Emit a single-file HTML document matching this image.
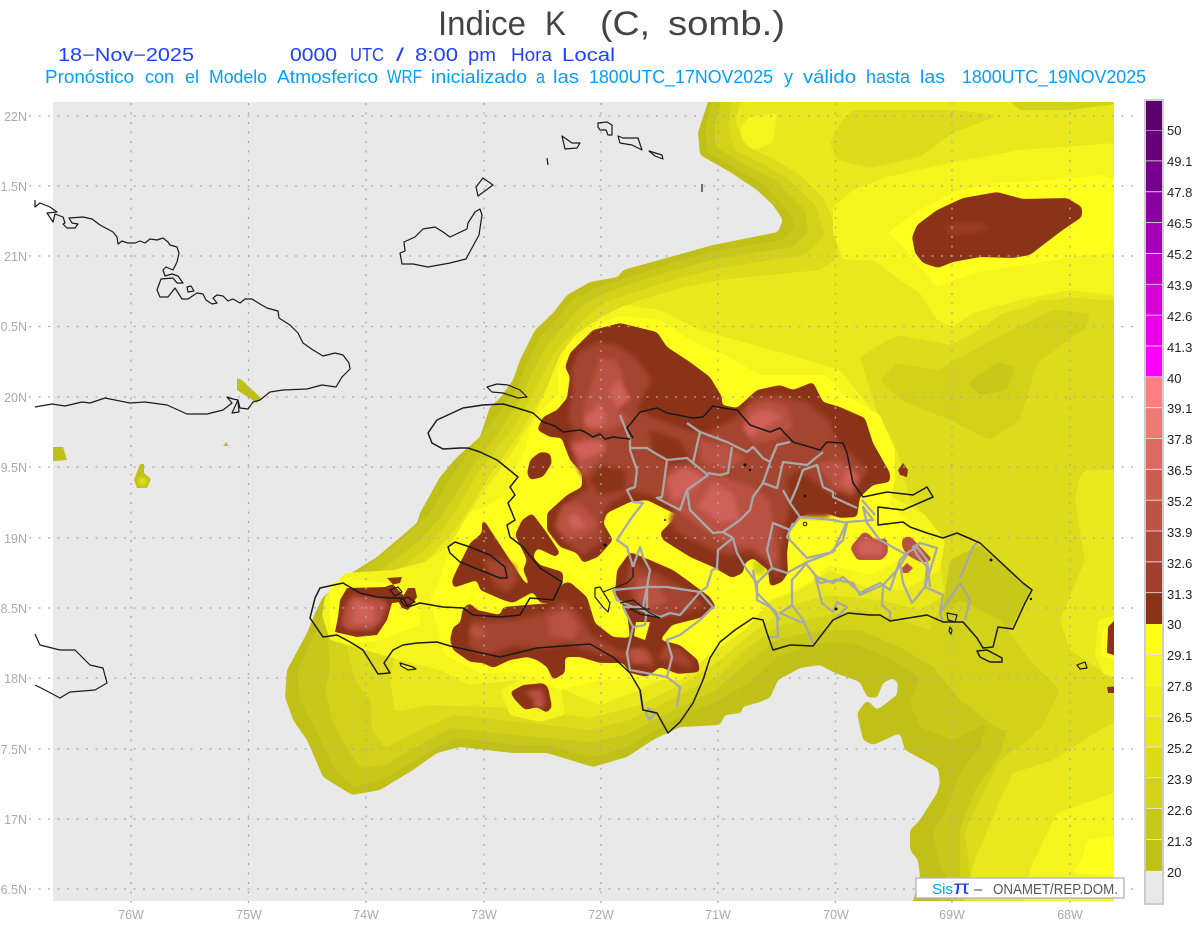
<!DOCTYPE html>
<html><head><meta charset="utf-8"><title>Indice K</title>
<style>html,body{margin:0;padding:0;background:#fff}svg{display:block}text{font-family:"Liberation Sans",sans-serif}.s{filter:url(#s)}.b{filter:url(#b)}</style></head>
<body>
<svg width="1200" height="927" viewBox="0 0 1200 927" xmlns="http://www.w3.org/2000/svg">
<defs>
<filter id="s" x="-20%" y="-20%" width="140%" height="140%" color-interpolation-filters="sRGB"><feGaussianBlur stdDeviation="2.2"/><feComponentTransfer><feFuncA type="linear" slope="10" intercept="-4.5"/></feComponentTransfer></filter>
<filter id="b" x="-30%" y="-30%" width="160%" height="160%" color-interpolation-filters="sRGB"><feGaussianBlur stdDeviation="2.4"/></filter>
<clipPath id="m"><rect x="53" y="102" width="1061" height="799"/></clipPath>
</defs>
<rect width="1200" height="927" fill="#fff"/>
<!-- headings -->
<g fill="#444" font-size="34">
<text x="438" y="35" textLength="88" lengthAdjust="spacingAndGlyphs">Indice</text>
<text x="545" y="35" textLength="21" lengthAdjust="spacingAndGlyphs">K</text>
<text x="600" y="35" textLength="50" lengthAdjust="spacingAndGlyphs">(C,</text>
<text x="668" y="35" textLength="117" lengthAdjust="spacingAndGlyphs">somb.)</text>
</g>
<g fill="#2040ff" font-size="18">
<text x="58" y="61" textLength="136" lengthAdjust="spacingAndGlyphs">18−Nov−2025</text>
<text x="290" y="61" textLength="47" lengthAdjust="spacingAndGlyphs">0000</text>
<text x="350" y="61" textLength="34" lengthAdjust="spacingAndGlyphs">UTC</text>
<text x="396" y="61" textLength="8" lengthAdjust="spacingAndGlyphs">/</text>
<text x="415" y="61" textLength="43" lengthAdjust="spacingAndGlyphs">8:00</text>
<text x="468" y="61" textLength="28" lengthAdjust="spacingAndGlyphs">pm</text>
<text x="511" y="61" textLength="41" lengthAdjust="spacingAndGlyphs">Hora</text>
<text x="562" y="61" textLength="53" lengthAdjust="spacingAndGlyphs">Local</text>
</g>
<g fill="#00a0ff" font-size="18">
<text x="45" y="83" textLength="89" lengthAdjust="spacingAndGlyphs">Pronóstico</text>
<text x="145" y="83" textLength="29" lengthAdjust="spacingAndGlyphs">con</text>
<text x="185" y="83" textLength="14" lengthAdjust="spacingAndGlyphs">el</text>
<text x="209" y="83" textLength="58" lengthAdjust="spacingAndGlyphs">Modelo</text>
<text x="277" y="83" textLength="101" lengthAdjust="spacingAndGlyphs">Atmosferico</text>
<text x="387" y="83" textLength="35" lengthAdjust="spacingAndGlyphs">WRF</text>
<text x="431" y="83" textLength="96" lengthAdjust="spacingAndGlyphs">inicializado</text>
<text x="536" y="83" textLength="9" lengthAdjust="spacingAndGlyphs">a</text>
<text x="553" y="83" textLength="26" lengthAdjust="spacingAndGlyphs">las</text>
<text x="589" y="83" textLength="184" lengthAdjust="spacingAndGlyphs">1800UTC_17NOV2025</text>
<text x="784" y="83" textLength="9" lengthAdjust="spacingAndGlyphs">y</text>
<text x="803" y="83" textLength="53" lengthAdjust="spacingAndGlyphs">válido</text>
<text x="866" y="83" textLength="44" lengthAdjust="spacingAndGlyphs">hasta</text>
<text x="920" y="83" textLength="25" lengthAdjust="spacingAndGlyphs">las</text>
<text x="962" y="83" textLength="184" lengthAdjust="spacingAndGlyphs">1800UTC_19NOV2025</text>
</g>
<!-- map background -->
<rect x="53" y="102" width="1061" height="799" fill="#e9e9e9"/>
<g clip-path="url(#m)">
<!-- small western patches -->
<g fill="#c0c018">
<polygon points="45,447 63,447 67,460 45,462"/>
<polygon points="135,477 140,464 144,464 144,473 151,479 147,488 137,488 134,480"/>
<polygon points="237,378 242,380 261,398 257,403 237,390"/>
<polygon points="223,446 226,442 229,446"/>
</g>
<polygon fill="#e8e81c" points="139,478 146,478 146,485 139,485" class="b"/>
<!-- scalar field layers -->
<polygon class="s" fill="#c0c018" points="708,90 708,102 698,132 700,155 730,172 757,190 773,205 783,220 778,232 713,245 670,257 623,270 618,277 590,282 567,295 553,313 535,330 520,360 513,380 500,398 490,407 480,437 457,457 440,477 420,513 417,523 377,557 353,572 323,597 315,613 307,633 287,670 285,697 293,720 307,740 317,763 323,777 352,795 380,790 413,770 437,753 460,747 513,753 547,753 593,767 627,757 653,740 680,727 720,725 725,715 742,713 742,707 757,703 770,698 778,680 800,668 820,665 833,672 860,682 867,697 877,698 883,683 893,678 898,683 897,695 877,710 867,700 857,713 863,740 873,745 900,733 905,750 938,768 940,783 937,793 920,820 910,830 910,850 918,860 920,877 913,901 910,915 1130,915 1130,90"/>
<polygon class="s" fill="#c8c81a" points="716,90 705,128 707,152 735,168 765,186 792,215 795,228 782,240 715,251 672,263 628,277 595,288 572,300 558,318 540,337 526,365 517,388 505,405 490,425 467,455 450,480 430,513 410,533 385,553 360,572 330,595 320,620 312,640 297,672 300,700 315,728 325,750 337,772 354,787 382,780 416,760 440,745 460,738 513,745 547,745 593,757 625,748 655,730 690,712 720,700 753,680 777,657 820,643 853,643 893,660 920,677 910,703 920,727 953,740 987,723 980,747 960,773 947,807 933,833 940,867 947,877 933,915 1130,915 1130,90"/>
<polygon class="s" fill="#d2d21a" points="725,90 714,128 716,147 745,165 775,180 805,210 808,232 792,247 720,258 675,270 630,284 600,295 578,308 565,325 547,345 532,372 523,395 510,415 497,435 475,463 458,490 440,518 420,540 395,560 370,578 340,600 328,640 330,670 325,690 332,720 345,745 360,768 385,765 420,745 450,728 515,735 590,742 625,735 670,712 715,690 745,665 775,640 820,630 860,630 905,650 930,665 960,680 1000,690 1010,720 1000,755 975,790 960,830 960,880 950,915 1130,915 1130,90"/>
<polygon class="s" fill="#dcdc1c" points="735,90 728,125 735,150 765,165 790,180 815,205 825,235 805,255 720,268 680,278 635,292 605,302 585,318 570,335 553,355 540,380 530,400 515,425 500,445 480,470 465,495 450,520 430,545 405,565 380,580 350,600 345,640 355,680 370,700 372,730 385,748 420,730 455,715 520,722 590,730 630,720 680,695 720,675 745,650 780,625 830,615 860,610 900,620 960,640 1000,660 1030,665 1040,700 1035,735 1000,760 985,790 965,830 975,915 1130,915 1130,90"/>
<!-- east DR darker -->
<polygon class="s" fill="#c8c81a" points="950,560 980,545 1030,590 1010,630 985,650 960,630 940,625"/>
<polygon class="s" fill="#d2d21a" points="930,620 960,600 1000,620 1030,660 1060,690 1040,730 1000,730 960,700 935,670"/>
<!-- e8 main -->
<polygon class="s" fill="#e8e81c" points="745,90 735,120 745,145 775,160 800,175 825,200 840,240 835,260 820,270 720,280 680,288 640,300 610,312 590,328 575,345 560,365 547,388 535,408 522,430 505,455 488,478 472,505 455,530 435,552 415,570 395,582 400,630 390,680 395,712 430,705 520,708 590,718 640,705 690,680 720,660 750,635 790,605 830,595 880,600 920,610 945,595 940,560 930,520 910,500 900,460 885,420 880,380 870,340 850,300 860,355 900,335 950,345 1040,300 1130,300 1130,90"/>
<polygon class="s" fill="#e8e81c" points="1130,430 1085,450 1075,500 1085,560 1060,620 1070,650 1130,690"/>
<polygon class="s" fill="#e8e81c" points="1000,800 1013,773 1053,760 1100,730 1130,713 1130,915 960,915 975,860"/>
<polygon class="s" fill="#f5f51e" points="1047,833 1057,813 1130,787 1130,915 1020,915 1030,870"/>
<polygon class="s" fill="#ffff1e" points="1087,840 1130,833 1130,877 1073,873 1083,857"/>
<!-- NE patches -->
<polygon class="s" fill="#dcdc1c" points="830,143 840,123 853,110 953,110 1000,115 953,133 920,157 870,168 837,160"/>
<polygon class="s" fill="#d2d21a" points="997,90 1130,90 1130,102 1070,110 1020,110"/>
<polygon class="s" fill="#f5f51e" points="740,127 750,117 777,113 773,143 753,150 742,140"/>
<polygon class="s" fill="#f5f51e" points="833,207 853,190 887,177 950,163 1020,150 1130,142 1130,297 1070,290 1020,300 973,313 953,327 937,320 920,293 900,280 873,260 843,260 833,233"/>
<polygon class="s" fill="#ffff1e" points="887,233 920,210 960,190 997,183 1053,180 1100,175 1130,183 1130,250 1070,257 1037,263 987,270 953,280 937,287 920,267 900,243"/>
<polygon class="s" fill="#dcdc1c" points="860,357 893,337 927,350 953,347 1003,313 1070,297 1130,303 1130,470 1085,470 1050,520 1030,490 1000,510 950,510 930,490 900,450 880,420 870,390"/>
<polygon class="s" fill="#d2d21a" points="880,380 897,363 937,370 987,343 1053,310 1090,313 1087,327 1037,363 1020,420 990,440 950,420 900,400"/>
<polygon class="s" fill="#c8c81a" points="968,383 997,362 1015,367 1007,390 980,395"/>
<!-- f4 main -->
<polygon class="s" fill="#f5f51e" points="625,305 600,318 575,335 560,355 548,385 535,415 520,440 500,470 485,490 468,515 450,545 425,562 395,570 345,573 325,597 322,615 330,640 400,660 440,670 470,685 520,680 560,688 600,705 640,690 690,665 715,650 735,625 760,605 800,590 830,570 870,590 905,590 940,570 945,540 925,515 880,490 895,460 880,420 860,395 840,370 790,355 700,330 660,310"/>
<polygon class="s" fill="#f5f51e" points="500,690 530,675 560,680 565,715 540,722 510,715"/>
<polygon class="s" fill="#ffff1e" points="620,316 595,325 568,345 558,370 558,395 540,412 530,430 525,450 515,470 510,490 490,505 470,512 450,545 440,580 430,600 445,655 480,673 515,672 540,680 560,690 600,680 640,680 680,680 715,650 745,630 770,600 805,585 830,565 870,575 900,560 925,535 890,505 895,480 895,450 880,415 845,395 825,375 790,375 760,375 725,355 690,340 660,320"/>
<polygon class="s" fill="#ffff1e" points="330,585 345,578 395,585 420,600 420,625 380,640 345,645 330,625"/>
<polygon class="b" fill="#d2d21a" points="752,562 760,558 768,565 764,575 754,574"/>
<polygon class="s" fill="#f5f51e" points="1130,612 1098,620 1095,655 1104,675 1130,678"/>
<polygon class="s" fill="#ffff1e" points="1130,622 1103,628 1100,655 1130,664"/>
<!-- brown contours -->
<g fill="#8b3318">
<polygon class="s" points="620,323 593,330 570,353 565,367 570,377 567,398 557,410 543,417 537,430 550,437 562,438 563,442 570,460 582,473 582,487 567,495 547,513 547,530 560,547 577,553 583,563 598,557 613,540 603,523 607,513 630,502 647,500 667,510 683,517 673,520 660,533 663,540 690,557 713,567 732,578 743,573 745,563 753,558 768,570 770,587 782,582 788,573 787,553 790,530 800,517 817,510 840,518 857,517 860,497 873,485 890,482 890,473 873,443 865,418 840,407 823,402 813,382 793,390 780,385 757,390 737,408 722,405 722,397 710,377 690,362 667,347 657,332"/>
<polygon class="s" points="450,640 453,627 460,623 463,608 470,603 477,610 500,615 503,607 550,603 563,583 570,582 587,597 595,623 613,637 630,638 627,612 615,593 617,570 630,552 650,560 673,570 687,580 710,597 716,607 700,618 672,625 660,640 680,645 698,660 700,672 678,674 660,667 647,677 630,673 623,663 600,663 580,657 565,657 565,673 553,680 547,667 537,660 527,657 510,660 493,668 483,663 470,662 453,650"/>
<polygon class="s" points="482,517 482,533 470,543 460,563 452,580 453,588 477,580 480,590 503,600 513,603 533,592 523,570 527,560 515,535 522,520 532,513 547,533 560,553 556,557 537,548 533,557 540,565 563,572 563,582 552,603 540,603 533,592 523,580"/>
<polygon class="s" points="530,460 540,452 550,453 552,463 543,477 530,480 527,473"/>
<polygon points="387,578 402,577 400,583 390,585 385,587 347,588 340,600 338,617 335,632 357,637 377,635 387,620 392,603 403,602 405,597"/>
<polygon points="408,588 415,588 417,597 408,610 402,608 399,603"/>
<polygon class="s" points="510,692 523,685 543,683 548,687 552,707 547,713 537,707 525,710 515,700"/>
<polygon class="s" points="912,237 917,225 937,210 963,198 997,192 1023,199 1067,198 1082,207 1082,217 1073,223 1060,232 1030,255 1013,258 980,257 953,262 938,268 923,263 915,253"/>
<polygon points="1120,615 1108,627 1107,653 1120,657"/>
<polygon points="1107,687 1120,686 1120,693 1108,693"/>
<polygon points="898,470 903,463 908,470 907,477 900,475"/>
</g>
<polygon fill="#ffff1e" points="636,622 650,622 645,640 634,636"/>
<polygon class="b" fill="#9a3c28" points="945,228 953,223 980,222 990,228 977,233 950,235"/>
<!-- crisp SE blobs -->
<g fill="#b95242" class="s">
<polygon points="850,548 863,532 868,533 875,540 887,538 888,553 882,560 857,560"/>
<polygon points="902,538 910,536 933,560 922,563 907,555 902,547"/>
</g>
<polygon fill="#b95242" points="902,568 907,563 913,568 908,573 903,573"/>
<!-- reddish layers -->
<g fill="#a4452f" class="b">
<polygon points="572,367 579,352 597,342 617,345 637,359 651,380 641,400 637,410 660,420 687,430 707,433 737,417 753,397 780,395 807,402 828,419 838,442 868,470 856,488 838,491 790,508 785,527 781,553 781,572 775,577 772,565 750,551 727,556 697,543 675,531 669,520 675,507 650,495 630,491 607,506 601,523 605,538 583,555 565,542 555,527 558,512 572,499 589,487 575,463 569,443 575,430 568,420 572,393"/>
<polygon points="472,620 493,621 513,620 543,613 563,601 578,612 591,635 620,652 645,647 655,660 652,667 630,661 597,653 567,643 547,649 513,646 487,655 468,646"/>
<polygon points="630,562 650,570 690,592 704,605 690,612 660,617 640,612 632,600 626,580"/>
<polygon points="483,560 500,558 515,565 518,580 508,592 495,586 490,575"/>
<polygon points="665,645 680,650 692,662 690,667 670,662 658,658"/>
</g>
<g fill="#8b3318" class="b">
<polygon points="797,470 823,487 840,507 827,517 800,517 790,507 787,480"/>
<polygon points="650,430 680,440 690,460 670,465 652,450"/>
<polygon points="600,465 625,470 625,490 600,495 590,480"/>
</g>
<g fill="#b95242" class="b">
<polygon points="583,417 587,397 600,357 617,360 623,377 613,403 630,420 610,430 590,430"/>
<polygon points="572,443 590,437 607,443 597,463 582,476"/>
<polygon points="660,493 673,467 707,470 733,480 753,487 770,500 773,523 778,555 773,570 770,560 753,547 730,547 700,527 680,513"/>
<polygon points="747,407 767,400 787,407 793,427 773,440 753,443 743,430"/>
<polygon points="700,440 727,445 745,458 725,472 700,462"/>
<polygon points="817,463 840,460 860,477 853,497 833,487"/>
<polygon points="563,505 580,502 598,523 590,535 570,540 556,527"/>
<polygon points="472,625 487,630 480,640 470,633"/>
<polygon points="547,617 567,610 580,627 573,640 550,635"/>
<polygon points="629,650 643,649 651,661 633,664"/>
<polygon points="352,595 380,599 388,604 381,622 371,630 349,630 341,625 345,607"/>
<polygon points="525,692 541,689 546,703 535,701"/>
<polygon points="637,575 655,582 668,600 650,610 637,600"/>
</g>
<g fill="#d0605a" class="b">
<polygon points="667,477 687,467 703,477 687,497 672,500"/>
<polygon points="713,483 733,493 740,520 720,523 697,507"/>
<polygon points="753,413 767,410 783,417 767,427 750,437 743,427"/>
<polygon points="583,420 600,403 607,417 603,427 587,427"/>
<polygon points="572,445 600,440 607,450 580,460"/>
<polygon points="567,517 577,513 587,527 573,530"/>
<polygon points="857,545 866,538 884,544 883,555 860,555"/>
<polygon points="912,545 925,555 915,557"/>
<polygon points="845,468 857,474 850,490 842,483"/>
<polygon points="354,600 375,606 374,622 352,625"/>
<polygon points="532,700 543,702 543,708 536,706"/>
<polygon points="620,378 630,400 615,410 610,390"/>
</g>
<polygon fill="#ffff1e" points="707,625 716,625 716,628 707,628"/>
</g>
<!-- grid -->
<g stroke="#aaa" stroke-width="1.3" stroke-dasharray="2 7.5" fill="none">
<path d="M29 116H1134M29 186H1134M29 256H1134M29 326.500H1134M29 397H1134M29 467H1134M29 538H1134M29 608H1134M29 678H1134M29 749H1134M29 819H1134M29 889H1134"/>
<path d="M131 103V906M248.500 103V906M366 103V906M484 103V906M601 103V906M718 103V906M835.500 103V906M952 103V906M1070 103V906"/>
</g>
<!-- gray province lines -->
<g fill="none" stroke="#a8a8a8" stroke-width="2.300" stroke-linejoin="round">
<path d="M620 415L630 440V450L637 470L635 487L627 490L633 502L643 503L630 520L617 540L627 547L633 567L640 547L643 557L650 570L647 587L643 607"/>
<path d="M630 448H647L653 452L667 460L687 458L693 463L700 432L687 423"/>
<path d="M700 432L727 442L747 452L753 447L763 458L770 462L777 445L790 442"/>
<path d="M667 460L662 497L657 498L680 510L687 490L697 483L708 475L693 463"/>
<path d="M708 473L720 475L728 473L732 447"/>
<path d="M687 490L690 510L700 520L713 533L723 532L740 520L750 510L753 497L763 483L770 463"/>
<path d="M763 483L777 488L783 462L807 465L823 452"/>
<path d="M783 490L790 503L797 487L803 470L817 465L823 487L833 492V497L857 508"/>
<path d="M790 503L800 517L790 530L773 523L767 550L772 568L787 573L807 562L830 553L843 540L847 523L833 520L800 517"/>
<path d="M723 532L733 538L718 550L717 568L712 570L707 587L700 592L667 587L647 587L613 590"/>
<path d="M733 538L737 553L747 570L757 583L763 577L772 568"/>
<path d="M757 583V600L770 607L780 620"/>
<path d="M807 565L817 577L833 583L843 577L860 593L880 583L890 590L900 560L907 553L917 547L927 560L930 587"/>
<path d="M793 523L787 537L807 558L833 552L847 522L873 520L863 507L867 523L880 540L907 555L897 570L883 585L860 595L853 583L837 580L820 583L815 575L822 603L833 612L837 602L847 607L837 617"/>
<path d="M883 587L882 605L890 612V620"/>
<path d="M900 563L903 583L912 603L925 587L927 567L917 555L913 547L920 543L937 548L925 587L943 595L940 613L943 622"/>
<path d="M960 583L940 613M960 583L970 600L965 620M960 578L973 547L978 542"/>
<path d="M807 563L792 580V605L803 620L813 643M803 623L780 613L792 605M777 613L778 637L767 637"/>
<path d="M753 570L757 593L777 613"/>
<path d="M862 500L875 515"/>
<path d="M613 590L617 600L633 607L660 617L670 613L680 615L700 592L713 607L700 620L680 635L667 640L672 657L667 677L680 687L677 707"/>
<path d="M647 587V607L645 625L633 627L627 653L630 670L667 677"/>
<path d="M643 607L623 607L633 627"/>
<path d="M640 690L643 710"/>
<path d="M648 708L655 713L650 720L646 714Z"/>
</g>
<!-- coasts -->
<g fill="none" stroke="#1a1a1a" stroke-width="1.200" stroke-linejoin="round">
<path d="M35 200V207L40 203L50 207L57 212L47 213L53 222L55 214L63 217L65 223L63 224L67 228L75 228L78 224L72 223L69 218L83 217L92 219L100 225L113 232L117 237L118 244L122 241L128 243L135 243L140 241L145 243L150 239L157 240L163 238L168 242L170 245L177 247L179 253L177 262L173 270L166 267L163 270L165 276L172 274L178 276L183 283L177 283L173 278L161 279L157 290L160 297L168 297L175 288L182 299L188 299L197 293L203 294L206 300L212 304L217 303L213 298L217 295L223 296L228 301L233 299L240 303L245 299L252 299L260 304L267 308L278 311L279 318L290 325L298 333L303 343L313 350L323 356L335 353L343 355L349 363L350 369L342 377L336 387L322 385L307 389L283 390L270 392L260 400L253 402L248 409L240 408L238 400L232 413L239 412L238 400L233 399L227 397L232 403L223 410L207 414L187 414L167 405L145 402L130 403L105 398L90 403L82 402L65 406L52 404L35 407"/>
<path d="M187 287L191 286L194 291L188 292Z"/>
<path d="M480 209L482 215L479 235L466 259L450 263L428 267L413 264L402 264L400 253L405 251L404 242L415 237L423 229L435 227L443 232L450 237L467 229L468 223L475 212Z"/>
<path d="M483 178L493 185L478 196L476 187Z"/>
<path d="M562 136L572 143L580 143L577 148L565 149Z"/>
<path d="M598 123L607 122L612 125V135H608L606 130H600L598 127Z"/>
<path d="M618 136L623 138H638L642 150L632 145L620 143Z"/>
<path d="M649 151L662 155L663 159L655 156Z"/>
<path d="M547 158L548 165M702 184L702 192"/>
<path d="M487 387L497 384L508 385L520 390L527 397L518 398L503 393L492 392Z"/>
<path d="M400 663L413 667L416 669L408 670L401 666Z"/>
<path d="M390 590L398 587L402 592L395 596Z"/>
<path d="M35 634L40 645L60 650L75 650L90 665L103 668L107 683L95 690L70 692L60 698L45 690L35 685"/>
<path d="M448 547L455 542L470 547L490 555L505 567L507 578L500 578L480 570L460 562L450 553Z" stroke-width="1.500"/>
<path d="M595 588L600 587L610 603L608 612L603 607L595 597Z"/>
<path d="M977 651L987 650L1002 658V662L990 662L980 657Z" stroke-width="1.500"/>
<path d="M1077 665L1085 662L1087 668L1080 669Z"/>
<path d="M947 613L957 615L955 622L948 620Z"/>
<path d="M950 627L952 630L951 634L949 631Z"/>
<path d="M630 439L613 437L605 439L600 434L593 437L585 432L580 430L563 432L555 426L543 422L533 413L517 408L503 404L483 405L463 408L437 420L428 433L432 443L443 449L460 448L468 448L480 452L497 460L507 468L518 477L510 487L515 495L508 503L515 520L507 525L510 537L523 547L540 568L562 582L553 600L530 598L520 615L500 617L473 615L463 608L443 607L420 603L408 607L403 598L390 598L377 597L360 593L343 583L320 588L315 598L310 618L323 637L337 635L350 642L363 650L378 674L390 673L384 663L393 650L403 645L417 643L437 642L450 646L500 657L537 648L590 644L613 657L630 673L640 690L643 710L657 713L668 733L680 722L693 703L703 680L710 658L720 642L735 630L753 618L763 620L767 633L773 650L790 645L813 646L833 620L848 613L870 615L880 615L890 621L927 615L943 622L963 622L977 638L983 648L993 647L998 627L1013 629L1025 603L1032 590L1023 583L980 543L957 533L943 538L927 533L910 527L903 522L878 525V507L903 510L933 497L927 487L913 495L887 492L863 497L853 483L847 453L843 443L827 442L820 450L793 442L780 428L770 432L750 425L737 410L723 408L713 406L703 417L693 418L667 413L657 408L640 412L627 428L633 438" stroke-width="1.500"/>
<path d="M633 567V577L627 583L603 592"/>
<path d="M620 603L633 600L650 613L660 618L640 614L630 609L650 609"/>
<path d="M400 600L408 597L415 602L405 606Z"/>
</g>
<g fill="#111">
<circle cx="1031" cy="599" r="1.200"/><circle cx="991" cy="560" r="1.500"/><circle cx="836" cy="609" r="1.500"/><circle cx="605" cy="545" r="1.500"/><circle cx="750" cy="470" r="1.200"/><circle cx="745" cy="465" r="1.500"/><circle cx="805" cy="496" r="1.200"/><circle cx="665" cy="520" r="1"/>
</g>
<circle cx="805" cy="524" r="1.800" fill="none" stroke="#111"/>
<!-- axis labels -->
<g fill="#aaa" font-size="12.500" text-anchor="end">
<text x="27" y="121">22N</text><text x="27" y="191">1.5N</text><text x="27" y="261">21N</text><text x="27" y="331">0.5N</text><text x="27" y="402">20N</text><text x="27" y="472">9.5N</text><text x="27" y="543">19N</text><text x="27" y="613">8.5N</text><text x="27" y="683">18N</text><text x="27" y="754">7.5N</text><text x="27" y="824">17N</text><text x="27" y="894">6.5N</text>
</g>
<g fill="#aaa" font-size="12.500" text-anchor="middle">
<text x="131" y="919">76W</text><text x="249" y="919">75W</text><text x="366" y="919">74W</text><text x="484" y="919">73W</text><text x="601" y="919">72W</text><text x="718" y="919">71W</text><text x="836" y="919">70W</text><text x="952" y="919">69W</text><text x="1070" y="919">68W</text>
</g>
<!-- colorbar -->
<rect x="1145" y="100" width="18" height="804" fill="#e9e9e9" stroke="#ccc" stroke-width="2"/>
<g>
<rect x="1146" y="101" width="16" height="29" fill="#5c006c"/>
<rect x="1146" y="130.500" width="16" height="30" fill="#68007c"/>
<rect x="1146" y="161.300" width="16" height="30" fill="#74008c"/>
<rect x="1146" y="192.200" width="16" height="30" fill="#8800a0"/>
<rect x="1146" y="223" width="16" height="30" fill="#a400b8"/>
<rect x="1146" y="253.900" width="16" height="30" fill="#c000c8"/>
<rect x="1146" y="284.700" width="16" height="30" fill="#d800d8"/>
<rect x="1146" y="315.500" width="16" height="30" fill="#ec00ec"/>
<rect x="1146" y="346.400" width="16" height="30" fill="#ff00ff"/>
<rect x="1146" y="377.200" width="16" height="30" fill="#ff8080"/>
<rect x="1146" y="408.100" width="16" height="30" fill="#ee7a74"/>
<rect x="1146" y="438.900" width="16" height="30" fill="#dd6a62"/>
<rect x="1146" y="469.800" width="16" height="30" fill="#cc5e50"/>
<rect x="1146" y="500.600" width="16" height="30" fill="#bc5444"/>
<rect x="1146" y="531.400" width="16" height="30" fill="#ae4a38"/>
<rect x="1146" y="562.300" width="16" height="30" fill="#a0402c"/>
<rect x="1146" y="593.100" width="16" height="31" fill="#8b3318"/>
<rect x="1146" y="624" width="16" height="30" fill="#ffff14"/>
<rect x="1146" y="654.800" width="16" height="30" fill="#f5f518"/>
<rect x="1146" y="685.700" width="16" height="30" fill="#eeee18"/>
<rect x="1146" y="716.500" width="16" height="30" fill="#e8e818"/>
<rect x="1146" y="747.400" width="16" height="30" fill="#dcdc14"/>
<rect x="1146" y="778.200" width="16" height="30" fill="#d2d218"/>
<rect x="1146" y="809" width="16" height="30" fill="#c8c818"/>
<rect x="1146" y="839.900" width="16" height="31" fill="#c0c018"/>
</g>
<g fill="#222" font-size="13">
<text x="1167" y="135">50</text><text x="1167" y="166">49.1</text><text x="1167" y="197">47.8</text><text x="1167" y="228">46.5</text><text x="1167" y="259">45.2</text><text x="1167" y="290">43.9</text><text x="1167" y="321">42.6</text><text x="1167" y="352">41.3</text><text x="1167" y="383">40</text><text x="1167" y="413">39.1</text><text x="1167" y="444">37.8</text><text x="1167" y="475">36.5</text><text x="1167" y="506">35.2</text><text x="1167" y="537">33.9</text><text x="1167" y="568">32.6</text><text x="1167" y="599">31.3</text><text x="1167" y="629">30</text><text x="1167" y="660">29.1</text><text x="1167" y="691">27.8</text><text x="1167" y="722">26.5</text><text x="1167" y="753">25.2</text><text x="1167" y="784">23.9</text><text x="1167" y="815">22.6</text><text x="1167" y="846">21.3</text><text x="1167" y="877">20</text>
</g>
<!-- logo -->
<rect x="916" y="878" width="208" height="20" fill="#fff" stroke="#b4b4b4" stroke-width="1.300"/>
<text x="932" y="894" font-size="15" fill="#00a0ff" textLength="21" lengthAdjust="spacingAndGlyphs">Sis</text>
<text x="953" y="894" font-size="19" fill="#2040ff" textLength="17" lengthAdjust="spacingAndGlyphs">π</text>
<text x="974" y="894" font-size="15" fill="#444">–</text>
<text x="993" y="894" font-size="14.500" fill="#555" textLength="125" lengthAdjust="spacingAndGlyphs">ONAMET/REP.DOM.</text>
</svg>
</body></html>
